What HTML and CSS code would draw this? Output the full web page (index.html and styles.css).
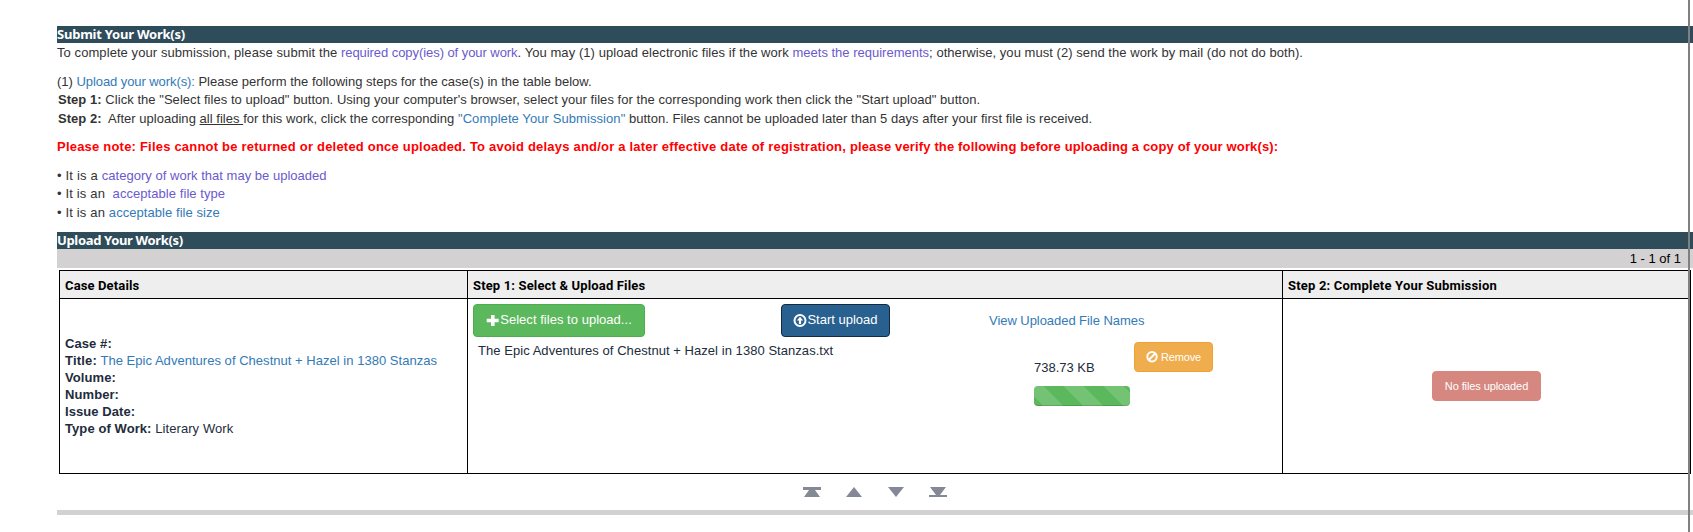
FILE: index.html
```html
<!DOCTYPE html>
<html lang="en">
<head>
<meta charset="utf-8">
<title>Submit Your Work(s)</title>
<link rel="stylesheet" href="styles.css">
</head>
<body>
<main class="page">
  <h2 class="bar bar-submit">Submit Your Work(s)</h2>
  <section class="intro">
    <p class="line"><span class="s1">To complete your submission, please submit the </span><a class="visited s2">required copy(ies) of your work</a><span class="s3">. You may (1) upload electronic files if the work </span><a class="visited s4">meets the requirements</a><span class="s5">; otherwise, you must (2) send the work by mail (do not do both).</span></p>
    <div class="group">
      <p class="line l2"><span>(1) </span><a>Upload your work(s):</a><span> Please perform the following steps for the case(s) in the table below.</span></p>
      <p class="line step l3"><b>Step 1:</b> Click the "Select files to upload" button. Using your computer's browser, select your files for the corresponding work then click the "Start upload" button.</p>
      <p class="line step l4"><b>Step 2:</b>&nbsp; After uploading <u>all files </u>for this work, click the corresponding <a>"Complete Your Submission"</a> button. Files cannot be uploaded later than 5 days after your first file is received.</p>
    </div>
    <p class="line note"><span>Please note: Files cannot be returned or deleted once uploaded. To avoid delays and/or a later effective date of registration, </span><span class="note-end">please verify the following before uploading a copy of your work(s):</span></p>
    <div class="group">
      <p class="line l5"><span>• It is a </span><a class="visited">category of work that may be uploaded</a></p>
      <p class="line l6"><span>• It is an&nbsp; </span><a class="visited">acceptable file type</a></p>
      <p class="line l7"><span>• It is an </span><a>acceptable file size</a></p>
    </div>
  </section>

  <h2 class="bar bar-upload">Upload Your Work(s)</h2>
  <div class="pager">1 - 1 of 1</div>

  <div class="table">
    <div class="th">Case Details</div>
    <div class="th th-files">Step 1: Select &amp; Upload Files</div>
    <div class="th th-complete">Step 2: Complete Your Submission</div>
    <div class="td details">
      <div><b>Case #:</b></div>
      <div class="title"><b>Title:</b> <a>The Epic Adventures of Chestnut + Hazel in 1380 Stanzas</a></div>
      <div><b>Volume:</b></div>
      <div><b>Number:</b></div>
      <div><b>Issue Date:</b></div>
      <div><b>Type of Work:</b> Literary Work</div>
    </div>
    <div class="td files">
      <div class="actions">
        <div class="btn btn-select"><svg width="14" height="13" viewBox="0 0 14 13"><path fill="#fff" d="M5 1h3.600v3.700h4.100v3.600H8.600V12H5V8.300H.700V4.700H5z"/></svg>Select files to upload...</div>
        <div class="btn btn-start"><svg width="14" height="14" viewBox="0 0 14 14"><circle cx="7" cy="6.500" r="5.500" fill="none" stroke="#fff" stroke-width="2"/><path fill="#fff" d="M7 2.800l3.200 3.700H8.100V10H5.900V6.500H3.800z"/></svg>Start upload</div>
        <a class="view">View Uploaded File Names</a>
      </div>
      <div class="file">
        <div class="name">The Epic Adventures of Chestnut + Hazel in 1380 Stanzas.txt</div>
        <div class="size"><div>738.73 KB</div><div class="progress"></div></div>
        <div class="btn btn-remove"><svg width="12" height="12" viewBox="0 0 12 12"><g fill="none" stroke="#fff" stroke-width="2"><circle cx="6" cy="5.700" r="4.700"/><path d="M2.700 9l6.600-6.600"/></g></svg><span>Remove</span></div>
      </div>
    </div>
    <div class="td complete"><div class="btn btn-none">No files uploaded</div></div>
  </div>

  <div class="nav">
    <svg width="18" height="10" viewBox="0 0 18 10"><path d="M0 0h18v3h-6l5 7H1l5-7H0z"/></svg>
    <svg width="18" height="10" viewBox="0 0 18 10"><path d="M9 0l8 10H1z"/></svg>
    <svg width="18" height="10" viewBox="0 0 18 10"><path d="M1 0h16L9 10z"/></svg>
    <svg width="18" height="10" viewBox="0 0 18 10"><path d="M1 0h16l-6 8h7v2H0V8h7z"/></svg>
  </div>
  <div class="rule"></div>
</main>
<div class="edge"></div>
</body>
</html>
```
FILE: styles.css
```css
* { box-sizing: border-box; }
body {
  margin: 0;
  height: 532px;
  overflow: hidden;
  position: relative;
  background: #fff;
  color: #333;
  font: 13px/18.57px "Liberation Sans", Arial, sans-serif;
}
.page { padding: 26px 0 0 57px; }
h2, p { margin: 0; }
a { color: #337ab7; }
.visited { color: #6a5acd; }
.bar {
  height: 17px;
  background: #2f4c5b;
  color: #fff;
  font: bold 13px/17px "Noto Sans", sans-serif;
  letter-spacing: -0.23px;
}
.bar-upload { letter-spacing: -0.34px; }
.intro { height: 189px; padding-top: 1.1px; display: flex; flex-direction: column; gap: 10px; }
.line { white-space: pre; height: 18.57px; }
.step { padding-left: 1px; }
.s1 { letter-spacing: 0.076px; }
.s2 { letter-spacing: -0.06px; }
.s3 { letter-spacing: 0.065px; }
.s5 { letter-spacing: 0.05px; }
.l2 a { letter-spacing: -0.08px; }
.l3 { letter-spacing: 0.045px; }
.l4 { letter-spacing: 0.024px; }
.l4 a { letter-spacing: 0.08px; }
.l5 { letter-spacing: 0.02px; }
.l5 span { letter-spacing: 0.2px; }
.l6, .l7 { letter-spacing: 0.06px; }
.l6 span, .l7 span { letter-spacing: 0.16px; }
.note { color: #f00; font-weight: bold; letter-spacing: 0.21px; }
.note-end { letter-spacing: 0.15px; }
.pager {
  height: 19px;
  padding-right: 12px;
  background: #d3d1d2;
  color: #000;
  line-height: 19px;
  text-align: right;
}
.table {
  width: 1632px;
  margin: 2px 0 0 2px;
  display: grid;
  grid-template-columns: 408px 815px 408px;
  grid-template-rows: 28px 175px;
  border-left: 1px solid #000;
  border-top: 1px solid #000;
}
.th, .td { border-right: 1px solid #000; border-bottom: 1px solid #000; }
.th {
  padding: 0 5px;
  background: #eee;
  color: #000;
  font: bold 13px/29px Roboto, sans-serif;
  letter-spacing: 0.13px;
}
.th-files { letter-spacing: 0.15px; }
.th-complete { letter-spacing: 0.19px; }
.td { padding: 5px; color: #222c3c; white-space: nowrap; }
.details { display: flex; flex-direction: column; justify-content: center; line-height: 17px; letter-spacing: 0.08px; }
.title { letter-spacing: 0.03px; }
.title b { letter-spacing: 0.2px; }
.btn {
  display: flex;
  align-items: center;
  justify-content: center;
  flex: none;
  border: 1px solid;
  border-radius: 4px;
  color: #fff;
}
.actions { display: flex; height: 33px; }
.btn-select { width: 172px; background: #5cb85c; border-color: #4cae4c; letter-spacing: 0.03px; }
.btn-start { width: 109px; margin-left: 136px; background: #286090; border-color: #122b40; }
.view { margin: 8px 0 0 99px; letter-spacing: -0.05px; }
.file { display: flex; padding-left: 5px; }
.name { width: 556px; padding-top: 5px; letter-spacing: 0.05px; }
.size { width: 100px; padding-top: 22px; }
.progress {
  width: 96px;
  height: 20px;
  margin-top: 8.43px;
  border-radius: 4px;
  background: #5cb85c linear-gradient(45deg, rgba(255,255,255,.15) 25%, transparent 25%, transparent 50%, rgba(255,255,255,.15) 50%, rgba(255,255,255,.15) 75%, transparent 75%) -10px 0 / 40px 40px;
  box-shadow: inset 0 -1px 0 rgba(0,0,0,.15);
}
.btn-remove {
  width: 79px;
  height: 30px;
  margin-top: 5px;
  gap: 3px;
  background: #f0ad4e;
  border-color: #eea236;
  font-size: 11px;
  letter-spacing: -0.2px;
}
.complete { display: flex; align-items: center; justify-content: center; }
.btn-none {
  width: 109px;
  height: 30px;
  background: #d6877f;
  border-color: #d6877f;
  font-size: 11px;
  letter-spacing: -0.1px;
}
.nav { display: flex; gap: 24px; padding: 13px 0 0 746px; }
.nav svg { display: block; fill: #858895; }
.rule { height: 5px; margin-top: 13px; background: #d3d1d2; }
.edge { position: absolute; left: 1688px; top: 0; width: 2px; height: 532px; background: #808080; }
```
